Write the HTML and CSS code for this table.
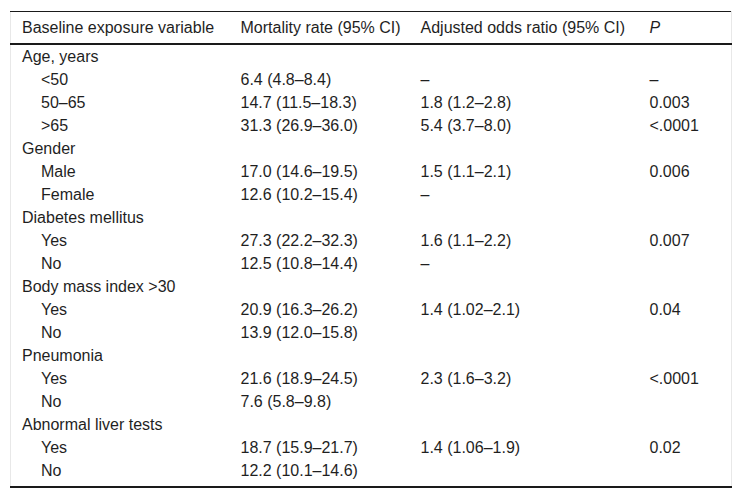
FILE: index.html
```html
<!DOCTYPE html>
<html>
<head>
<meta charset="utf-8">
<link rel="stylesheet" href="styles.css">
</head>
<body>
<div class="wrap">
<table class="tbl">
<colgroup>
<col class="c1"><col class="c2"><col class="c3"><col class="c4">
</colgroup>
<thead>
<tr><th>Baseline exposure variable</th><th>Mortality rate (95% CI)</th><th>Adjusted odds ratio (95% CI)</th><th><i>P</i></th></tr>
</thead>
<tbody>
<tr><td>Age, years</td><td></td><td></td><td></td></tr>
<tr><td class="ind">&lt;50</td><td>6.4 (4.8–8.4)</td><td>–</td><td>–</td></tr>
<tr><td class="ind">50–65</td><td>14.7 (11.5–18.3)</td><td>1.8 (1.2–2.8)</td><td>0.003</td></tr>
<tr><td class="ind">&gt;65</td><td>31.3 (26.9–36.0)</td><td>5.4 (3.7–8.0)</td><td>&lt;.0001</td></tr>
<tr><td>Gender</td><td></td><td></td><td></td></tr>
<tr><td class="ind">Male</td><td>17.0 (14.6–19.5)</td><td>1.5 (1.1–2.1)</td><td>0.006</td></tr>
<tr><td class="ind">Female</td><td>12.6 (10.2–15.4)</td><td>–</td><td></td></tr>
<tr><td>Diabetes mellitus</td><td></td><td></td><td></td></tr>
<tr><td class="ind">Yes</td><td>27.3 (22.2–32.3)</td><td>1.6 (1.1–2.2)</td><td>0.007</td></tr>
<tr><td class="ind">No</td><td>12.5 (10.8–14.4)</td><td>–</td><td></td></tr>
<tr><td>Body mass index &gt;30</td><td></td><td></td><td></td></tr>
<tr><td class="ind">Yes</td><td>20.9 (16.3–26.2)</td><td>1.4 (1.02–2.1)</td><td>0.04</td></tr>
<tr><td class="ind">No</td><td>13.9 (12.0–15.8)</td><td></td><td></td></tr>
<tr><td>Pneumonia</td><td></td><td></td><td></td></tr>
<tr><td class="ind">Yes</td><td>21.6 (18.9–24.5)</td><td>2.3 (1.6–3.2)</td><td>&lt;.0001</td></tr>
<tr><td class="ind">No</td><td>7.6 (5.8–9.8)</td><td></td><td></td></tr>
<tr><td>Abnormal liver tests</td><td></td><td></td><td></td></tr>
<tr><td class="ind">Yes</td><td>18.7 (15.9–21.7)</td><td>1.4 (1.06–1.9)</td><td>0.02</td></tr>
<tr class="last"><td class="ind">No</td><td>12.2 (10.1–14.6)</td><td></td><td></td></tr>
</tbody>
</table>
</div>
</body>
</html>
```
FILE: styles.css
```css
html, body {
  margin: 0;
  padding: 0;
  background: #fff;
}
.wrap {
  padding: 11px 10px 0 10px;
}
.tbl {
  width: 721px;
  table-layout: fixed;
  border-collapse: collapse;
  font-family: "Liberation Sans", Arial, sans-serif;
  font-size: 16px;
  color: #1f1f1f;
  border-left: 1px solid #e8e8e8;
  border-right: 1px solid #e8e8e8;
  border-top: 1px solid #1a1a1a;
  border-bottom: 2px solid #1a1a1a;
}
.c1 { width: 230px; }
.c2 { width: 180px; }
.c3 { width: 229px; }
.c4 { width: 82px; }
.tbl th {
  font-weight: normal;
  text-align: left;
  height: 31px;
  padding: 0;
  vertical-align: middle;
  white-space: nowrap;
  border-bottom: 2px solid #1a1a1a;
}
.tbl td {
  height: 23px;
  padding: 0;
  vertical-align: middle;
  white-space: nowrap;
}
.tbl th:first-child,
.tbl td:first-child {
  padding-left: 11px;
}
.tbl td.ind {
  padding-left: 30px;
}
.tbl tr.last td {
  padding-bottom: 4px;
}
.tbl i {
  font-style: italic;
}
```
